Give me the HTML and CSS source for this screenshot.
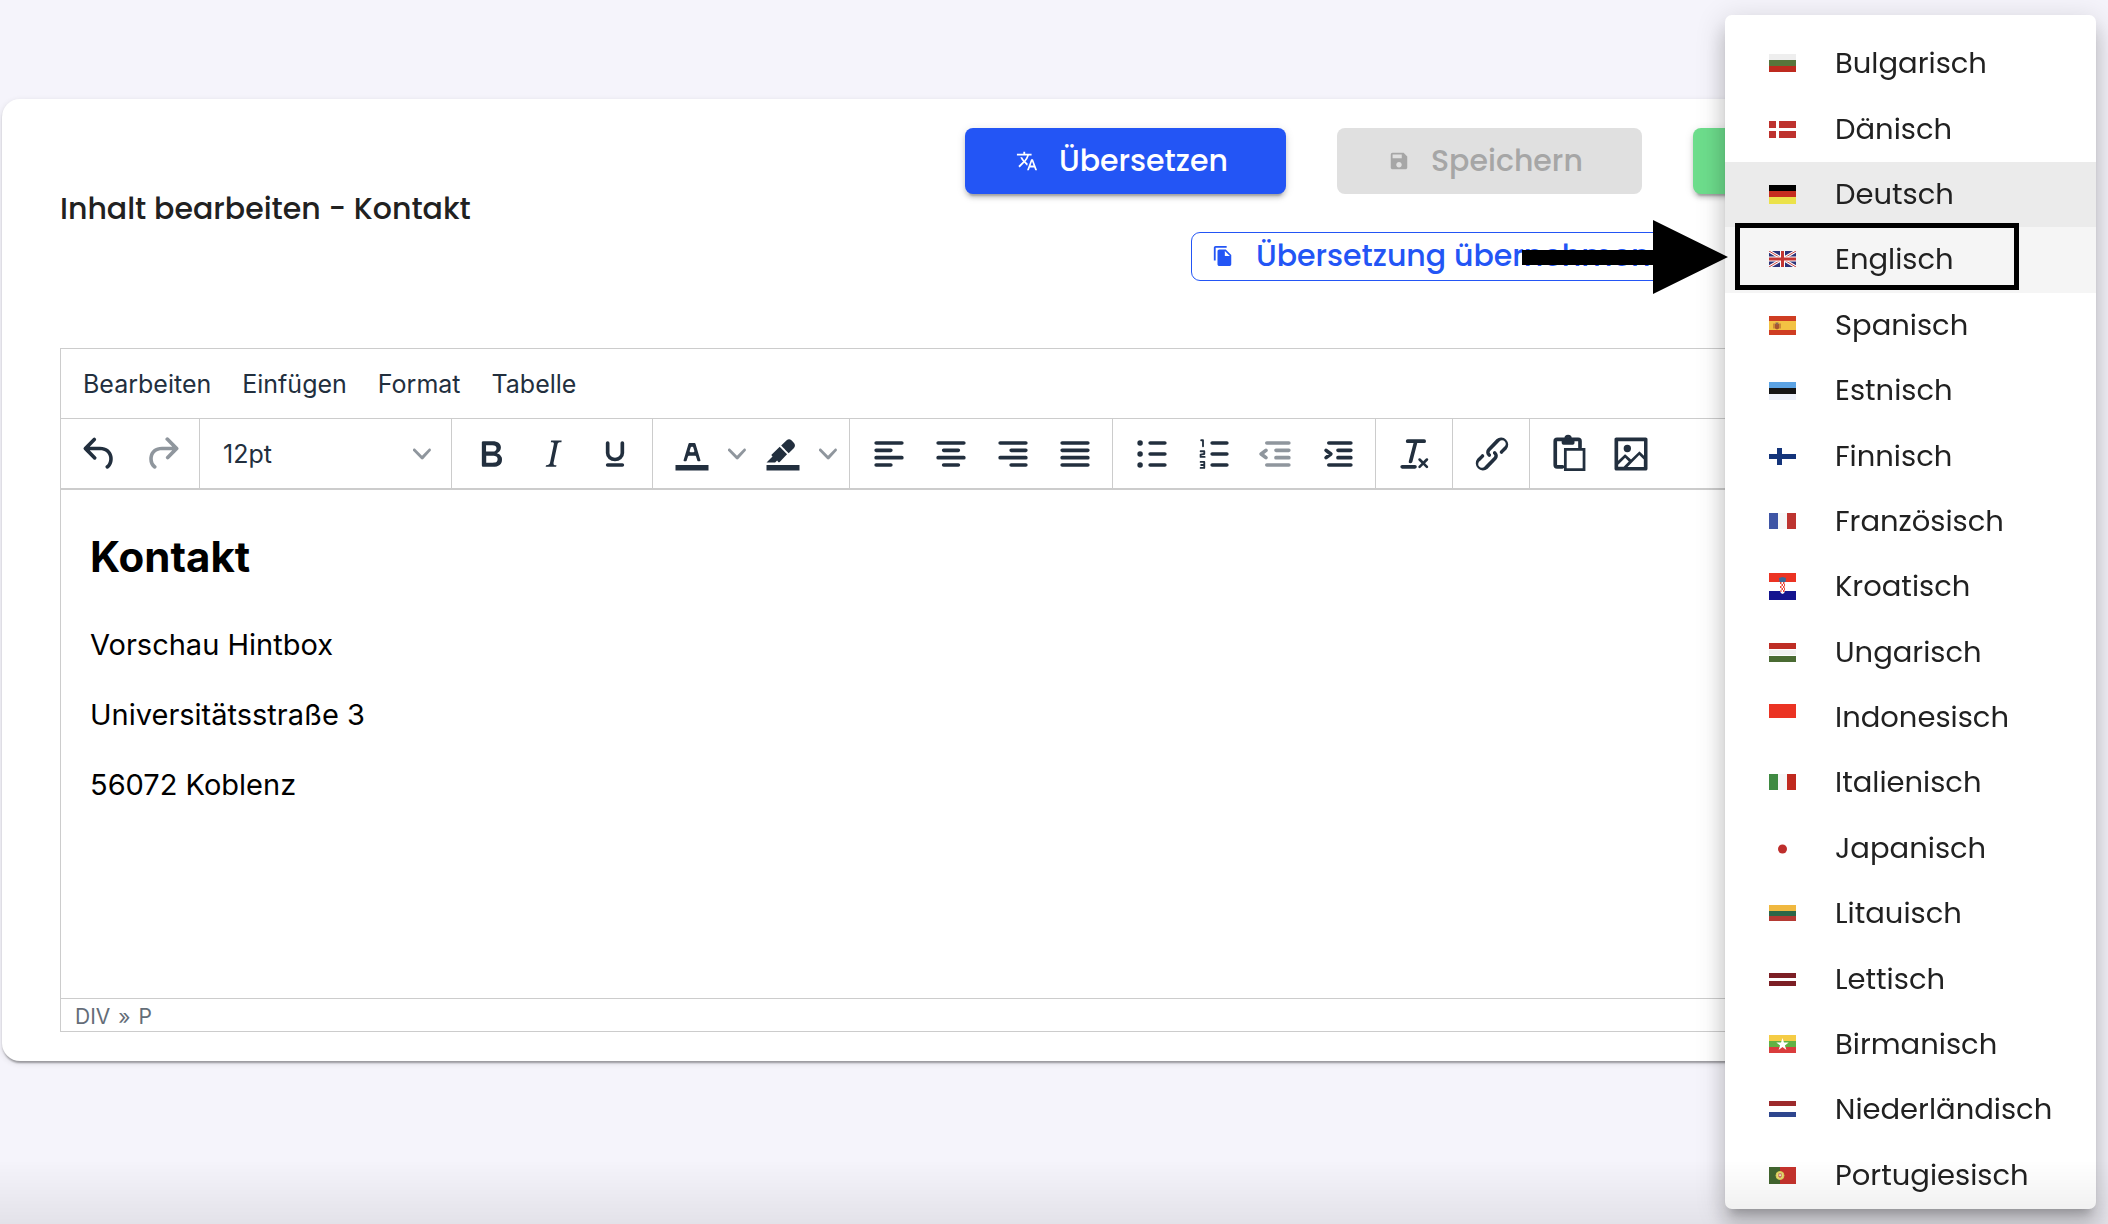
FILE: index.html
```html
<!DOCTYPE html>
<html lang="de">
<head>
<meta charset="utf-8">
<meta name="viewport" content="width=device-width, initial-scale=1">
<title>Inhalt bearbeiten - Kontakt</title>
<link rel="stylesheet" href="styles.css">
</head>
<body>
<main class="card">
  <header class="card-header">
    <h1 class="title">Inhalt bearbeiten - Kontakt</h1>
    <div class="actions">
      <div class="action-row">
        <button class="btn btn-primary" type="button">
          <svg class="btn-icon" viewBox="0 0 24 24" aria-hidden="true"><path d="M12.87 15.07l-2.54-2.51.03-.03A17.52 17.52 0 0 0 14.07 6H17V4h-7V2H8v2H1v1.99h11.17C11.5 7.92 10.44 9.75 9 11.35 8.07 10.32 7.3 9.19 6.69 8h-2c.73 1.63 1.73 3.17 2.98 4.56l-5.09 5.02L4 19l5-5 3.11 3.11.76-2.04zM18.5 10h-2L12 22h2l1.12-3h4.75L21 22h2l-4.5-12zm-2.62 7l1.62-4.33L19.12 17h-3.24z"/></svg>
          Übersetzen
        </button>
        <button class="btn btn-disabled" type="button" disabled>
          <svg class="btn-icon" viewBox="0 0 24 24" aria-hidden="true"><path d="M17 3H5a2 2 0 0 0-2 2v14c0 1.1.89 2 2 2h14c1.1 0 2-.9 2-2V7l-4-4zm-5 16c-1.66 0-3-1.34-3-3s1.34-3 3-3 3 1.34 3 3-1.34 3-3 3zm3-10H5V5h10v4z"/></svg>
          Speichern
        </button>
        <button class="btn btn-success" type="button" aria-label="Fertig"></button>
      </div>
      <button class="btn-outline" type="button">
        <svg class="btn-icon" viewBox="0 0 24 24" aria-hidden="true"><path d="M16 1H4c-1.1 0-2 .9-2 2v14h2V3h12V1zm-1 4l6 6v10c0 1.1-.9 2-2 2H7.99C6.89 23 6 22.1 6 21l.01-14c0-1.1.89-2 1.99-2h7zm-1 7h5.5L14 6.5V12z"/></svg>
        Übersetzung übernehmen
      </button>
    </div>
  </header>

  <section class="editor" aria-label="Editor">
    <div class="menubar" role="menubar">
      <button type="button" role="menuitem">Bearbeiten</button>
      <button type="button" role="menuitem">Einfügen</button>
      <button type="button" role="menuitem">Format</button>
      <button type="button" role="menuitem">Tabelle</button>
    </div>
    <div class="toolbar" role="toolbar">
      <div class="group">
        <button class="tool" type="button" aria-label="Rückgängig"><svg viewBox="0 0 24 24"><path d="M6.4 8H12c3.7 0 6.2 2 6.8 5.1.6 2.7-.4 5.6-2.3 6.8a1 1 0 0 1-1-1.8c1.1-.6 1.8-2.7 1.4-4.6-.5-2.1-2.1-3.5-4.9-3.5H6.4l3.3 3.3a1 1 0 1 1-1.4 1.4l-5-5a1 1 0 0 1 0-1.4l5-5a1 1 0 0 1 1.4 1.4L6.4 8Z"/></svg></button>
        <button class="tool" type="button" aria-label="Wiederholen" disabled><svg viewBox="0 0 24 24"><path d="M17.6 10H12c-2.8 0-4.4 1.4-4.9 3.5-.4 2 .3 4 1.4 4.6a1 1 0 1 1-1 1.8c-2-1.2-2.9-4.1-2.3-6.8.6-3 3-5.1 6.8-5.1h5.6l-3.3-3.3a1 1 0 1 1 1.4-1.4l5 5a1 1 0 0 1 0 1.4l-5 5a1 1 0 0 1-1.4-1.4l3.3-3.3Z"/></svg></button>
      </div>
      <div class="group">
        <div class="size-field">
          <select class="size" aria-label="Schriftgröße"><option>12pt</option></select>
          <svg class="chevron" viewBox="0 0 10 10" aria-hidden="true"><path d="M8.7 2.2c.3-.3.8-.3 1 0 .4.4.4.9 0 1.2L5.7 7.8c-.3.3-.9.3-1.2 0L.2 3.4a.8.8 0 0 1 0-1.2c.3-.3.8-.3 1.1 0L5 6l3.7-3.8Z"/></svg>
        </div>
      </div>
      <div class="group">
        <button class="tool" type="button" aria-label="Fett"><svg viewBox="0 0 24 24"><path d="M7.8 19c-.3 0-.5 0-.6-.2l-.2-.5V5.7c0-.2 0-.4.2-.5l.6-.2h5c1.5 0 2.7.3 3.5 1 .7.6 1.1 1.4 1.1 2.5a3 3 0 0 1-.6 1.9c-.4.6-1 1-1.6 1.2.4.1.9.3 1.3.6s.8.7 1 1.2c.4.4.5 1 .5 1.6 0 1.3-.4 2.3-1.3 3-.8.7-2.1 1-3.8 1H7.8Zm5-8.3c.6 0 1.2-.1 1.6-.5.4-.3.6-.7.6-1.3 0-1.1-.8-1.7-2.3-1.7H9.3v3.5h3.4Zm.5 6c.7 0 1.3-.1 1.7-.4.4-.4.6-.9.6-1.5s-.2-1-.7-1.4c-.4-.3-1-.4-2-.4H9.4v3.8h4Z"/></svg></button>
        <button class="tool" type="button" aria-label="Kursiv"><svg viewBox="0 0 24 24"><path d="m16.7 4.7-.1.9h-.3c-.6 0-1 0-1.4.3-.3.3-.4.6-.5 1.1l-2.1 9.8v.6c0 .5.4.8 1.4.8h.2l-.2.8H8l.2-.8h.2c1.1 0 1.8-.5 2-1.5l2-9.8.1-.5c0-.6-.4-.8-1.4-.8h-.3l.2-.9h5.8Z"/></svg></button>
        <button class="tool" type="button" aria-label="Unterstrichen"><svg class="line" viewBox="0 0 24 24"><path d="M8 6v5.500c0 2 1.800 3.500 4 3.500s4-1.500 4-3.500V6M8 18h8"/></svg></button>
      </div>
      <div class="group">
        <button class="tool tool-split" type="button" aria-label="Textfarbe"><svg viewBox="0 0 24 24"><path d="M3 18h18v3H3z"/><path d="M8.700 16h-.8a.5.5 0 0 1-.5-.6l2.700-9c.1-.3.3-.4.5-.4h2.800c.2 0 .4.1.5.4l2.700 9a.5.5 0 0 1-.5.6h-.8a.5.5 0 0 1-.4-.4l-.7-2.200c0-.3-.3-.4-.5-.4h-3.400c-.2 0-.4.1-.5.4l-.7 2.200c0 .3-.2.4-.4.4Zm2.600-7.600-.6 2a.5.5 0 0 0 .5.6h1.600a.5.5 0 0 0 .5-.6l-.6-2c0-.3-.3-.4-.5-.4h-.4c-.2 0-.4.1-.5.4Z"/></svg></button>
        <button class="tool-arrow" type="button" aria-label="Textfarbe wählen"><svg class="chevron" viewBox="0 0 10 10"><path d="M8.7 2.2c.3-.3.8-.3 1 0 .4.4.4.9 0 1.2L5.7 7.8c-.3.3-.9.3-1.2 0L.2 3.4a.8.8 0 0 1 0-1.2c.3-.3.8-.3 1.1 0L5 6l3.700-3.800Z"/></svg></button>
        <button class="tool tool-split" type="button" aria-label="Hintergrundfarbe"><svg viewBox="0 0 24 24"><path d="M3 18h18v3H3z"/><path d="M7.700 16.700H3l3.300-3.300-.7-.8L10.200 8l4 4.100-4 4.200c-.2.2-.6.2-.8 0l-.6-.7-1.100 1.100zm5-7.500L11 7.400l3-2.900a2 2 0 0 1 2.600 0L18 6c.7.7.7 2 0 2.700l-2.900 2.900-1.800-1.800-.5-.6"/></svg></button>
        <button class="tool-arrow" type="button" aria-label="Hintergrundfarbe wählen"><svg class="chevron" viewBox="0 0 10 10"><path d="M8.7 2.2c.3-.3.8-.3 1 0 .4.4.4.9 0 1.2L5.7 7.8c-.3.3-.9.3-1.2 0L.2 3.4a.8.8 0 0 1 0-1.2c.3-.3.8-.3 1.1 0L5 6l3.700-3.800Z"/></svg></button>
      </div>
      <div class="group">
        <button class="tool" type="button" aria-label="Linksbündig"><svg class="line" viewBox="0 0 24 24"><path d="M5 6h14M5 10h8M5 14h14M5 18h8"/></svg></button>
        <button class="tool" type="button" aria-label="Zentriert"><svg class="line" viewBox="0 0 24 24"><path d="M5 6h14M8 10h8M5 14h14M8 18h8"/></svg></button>
        <button class="tool" type="button" aria-label="Rechtsbündig"><svg class="line" viewBox="0 0 24 24"><path d="M5 6h14M11 10h8M5 14h14M11 18h8"/></svg></button>
        <button class="tool" type="button" aria-label="Blocksatz"><svg class="line" viewBox="0 0 24 24"><path d="M5 6h14M5 10h14M5 14h14M5 18h14"/></svg></button>
      </div>
      <div class="group">
        <button class="tool" type="button" aria-label="Aufzählung"><svg class="line" viewBox="0 0 24 24"><path d="M11 6h8M11 12h8M11 18h8"/><g class="solid"><circle cx="5.500" cy="6" r="1.500"/><circle cx="5.500" cy="12" r="1.500"/><circle cx="5.500" cy="18" r="1.500"/></g></svg></button>
        <button class="tool" type="button" aria-label="Nummerierte Liste"><svg class="line" viewBox="0 0 24 24"><path d="M11 6h8M11 12h8M11 18h8"/><path class="thin" d="M5 4.500h1v3.300M4.700 10.500h2v1.500l-2 .3v1.300h2.200M4.700 16.300h2v3.300h-2M5 18h1.600"/></svg></button>
        <button class="tool" type="button" aria-label="Einzug verkleinern" disabled><svg class="line" viewBox="0 0 24 24"><path d="M7 6h12M12 10h7M12 14h7M7 18h12M6.500 10l-2.600 2 2.600 2"/></svg></button>
        <button class="tool" type="button" aria-label="Einzug vergrößern"><svg class="line" viewBox="0 0 24 24"><path d="M7 6h12M12 10h7M12 14h7M7 18h12M5.500 10l2.600 2-2.600 2"/></svg></button>
      </div>
      <div class="group">
        <button class="tool" type="button" aria-label="Formatierung entfernen"><svg viewBox="0 0 24 24"><path d="M13.200 6a1 1 0 0 1 0 .2l-2.600 10a1 1 0 0 1-1 .8h-.2a.8.8 0 0 1-.8-1l2.600-10H8a1 1 0 1 1 0-2h9a1 1 0 0 1 0 2h-3.800ZM5 18h7a1 1 0 0 1 0 2H5a1 1 0 0 1 0-2Zm13 1.500L16.500 18 15 19.500a.7.7 0 0 1-1-1l1.500-1.500-1.500-1.500a.7.7 0 0 1 1-1l1.500 1.500 1.500-1.500a.7.7 0 0 1 1 1L17.500 17l1.500 1.500a.7.7 0 0 1-1 1Z"/></svg></button>
      </div>
      <div class="group">
        <button class="tool" type="button" aria-label="Link"><svg viewBox="0 0 24 24"><path d="M6.200 12.300a1 1 0 0 1 1.400 1.400l-2 2a2 2 0 1 0 2.600 2.800l4.800-4.800a1 1 0 0 0 0-1.400 1 1 0 1 1 1.400-1.300 2.900 2.900 0 0 1 0 4L9.600 20a3.900 3.900 0 0 1-5.500-5.500l2-2Zm11.600-.6a1 1 0 0 1-1.400-1.400l2-2a2 2 0 1 0-2.600-2.800L11 10.300a1 1 0 0 0 0 1.400A1 1 0 1 1 9.600 13a2.900 2.900 0 0 1 0-4L14.400 4a3.900 3.900 0 0 1 5.500 5.500l-2 2Z"/></svg></button>
      </div>
      <div class="group group-last">
        <button class="tool" type="button" aria-label="Einfügen"><svg class="line" viewBox="0 0 24 24"><path d="M8.500 19H5.500a1 1 0 0 1-1-1V5a1 1 0 0 1 1-1h11.500a1 1 0 0 1 1 1v3.500"/><path class="square" d="M10 9.500h10.200v11H10z"/><path class="solid" fill-rule="evenodd" d="M8 3.500h1.500a2 2 0 0 1 4 0H15V6a1 1 0 0 1-1 1H9a1 1 0 0 1-1-1zm3.500-.4a.9.9 0 1 0 0 1.800.9.9 0 0 0 0-1.800z"/></svg></button>
        <button class="tool" type="button" aria-label="Bild"><svg viewBox="0 0 24 24"><path fill-rule="evenodd" d="m5 15.700 3.300-3.200c.3-.3.7-.3 1 0L12 15l4.100-4c.3-.4.8-.4 1 0l2 1.900V5H5v10.700ZM5 18V19h3l2.800-2.900-2-2L5 17.900Zm14-3-2.500-2.400-6.400 6.500H19v-4ZM4 3h16c.6 0 1 .4 1 1v16c0 .6-.4 1-1 1H4a1 1 0 0 1-1-1V4c0-.6.4-1 1-1Zm6 8a2 2 0 1 0 0-4 2 2 0 0 0 0 4Z"/></svg></button>
      </div>
    </div>
    <article class="content">
      <h2>Kontakt</h2>
      <p>Vorschau Hintbox</p>
      <p>Universitätsstraße 3</p>
      <p>56072 Koblenz</p>
    </article>
    <footer class="statusbar"><span>DIV</span><span>»</span><span>P</span></footer>
  </section>
</main>

<ul class="languages" role="listbox" aria-label="Sprache">
  <li role="option"><svg class="flag" viewBox="0 0 27 27"><path fill="#eee" d="M0 4h27v6H0z"/><path fill="#57753b" d="M0 10h27v6H0z"/><path fill="#be2a1f" d="M0 16h27v6H0z"/></svg>Bulgarisch</li>
  <li role="option"><svg class="flag" viewBox="0 0 27 27"><path fill="#be322e" d="M0 5h7v7H0zM10 5h17v7H10zM0 15h7v7H0zM10 15h17v7H10z"/></svg>Dänisch</li>
  <li role="option" class="selected" aria-selected="true"><svg class="flag" viewBox="0 0 27 27"><path fill="#000" d="M0 4h27v6H0z"/><path fill="#c62d20" d="M0 10h27v6H0z"/><path fill="#ebe24a" d="M0 16h27v7H0z"/></svg>Deutsch</li>
  <li role="option" class="active"><svg class="flag" viewBox="0 0 27 27"><path fill="#2d3278" d="M0 5h27v16H0z"/><svg y="5" width="27" height="16" viewBox="0 0 27 16"><path stroke="#fff" stroke-width="3" d="M0 0l27 16M27 0L0 16"/><path stroke="#c8423f" stroke-width="1" d="M0 0l27 16M27 0L0 16"/><path stroke="#fff" stroke-width="5" d="M13.500 0v16M0 8h27"/><path stroke="#c33533" stroke-width="3" d="M13.500 0v16M0 8h27"/></svg></svg>Englisch</li>
  <li role="option"><svg class="flag" viewBox="0 0 27 27"><path fill="#cf3d22" d="M0 4h27v19H0z"/><path fill="#f3c243" d="M0 9h27v9H0z"/><path fill="#a8552f" d="M4.500 11.500h1v5h-1zM6 12h4v4.500l-2 1-2-1zM10.500 11.500h1v5h-1z"/><path fill="#8c6a5a" d="M6.500 10.500h3v2h-3z"/></svg>Spanisch</li>
  <li role="option"><svg class="flag" viewBox="0 0 27 27"><path fill="#5ca3e4" d="M0 5h27v6H0z"/><path fill="#151515" d="M0 11h27v6H0z"/><path fill="#eef2fb" d="M0 17h27v6H0z"/></svg>Estnisch</li>
  <li role="option"><svg class="flag" viewBox="0 0 27 27"><path fill="#14347a" d="M8 5h5v6h14v5H13v6H8v-6H0v-5h8z"/></svg>Finnisch</li>
  <li role="option"><svg class="flag" viewBox="0 0 27 27"><path fill="#3f55a5" d="M0 5h9v16H0z"/><path fill="#f7f7f7" d="M9 5h9v16H9z"/><path fill="#bd3430" d="M18 5h9v16h-9z"/></svg>Französisch</li>
  <li role="option"><svg class="flag" viewBox="0 0 27 27"><path fill="#eb3323" d="M0 0h27v9H0z"/><path fill="#fff" d="M0 9h27v9H0z"/><path fill="#14148f" d="M0 18h27v9H0z"/><path fill="#fff" d="M11 8h5v9q0 3-2.500 4Q11 20 11 17z"/><path fill="#eb4a3c" d="M11 9h1.500v2H11zM14 9h1.500v2H14zM12.500 11H14v2h-1.500zM15 11h1v2h-1zM11 13h1.500v2H11zM14 13h1.500v2H14zM12.500 15H14v2h-1.500zM15 15h1v2h-1zM11.500 17h1v2h-1zM14 17h1.500v2H14z"/><path fill="#39699a" d="M10 5l3.500-1L17 5l-.5 4h-6z"/></svg>Kroatisch</li>
  <li role="option"><svg class="flag" viewBox="0 0 27 27"><path fill="#be2d25" d="M0 4h27v6H0z"/><path fill="#f1f1f1" d="M0 11h27v5H0z"/><path fill="#4a6b33" d="M0 17h27v6H0z"/></svg>Ungarisch</li>
  <li role="option"><svg class="flag" viewBox="0 0 27 27"><path fill="#eb3323" d="M0 0h27v14H0z"/></svg>Indonesisch</li>
  <li role="option"><svg class="flag" viewBox="0 0 27 27"><path fill="#3f8a42" d="M0 5h9v16H0z"/><path fill="#f6f6f6" d="M9 5h9v16H9z"/><path fill="#c0291e" d="M18 5h9v16h-9z"/></svg>Italienisch</li>
  <li role="option"><svg class="flag" viewBox="0 0 27 27"><circle cx="13.500" cy="14" r="4.500" fill="#be2e2c"/></svg>Japanisch</li>
  <li role="option"><svg class="flag" viewBox="0 0 27 27"><path fill="#f0b83f" d="M0 5h27v6H0z"/><path fill="#2c6748" d="M0 11h27v6H0z"/><path fill="#b53a33" d="M0 16h27v5H0z"/></svg>Litauisch</li>
  <li role="option"><svg class="flag" viewBox="0 0 27 27"><path fill="#7c1f25" d="M0 7h27v5H0zM0 15h27v5H0z"/></svg>Lettisch</li>
  <li role="option"><svg class="flag" viewBox="0 0 27 27"><path fill="#f5cc45" d="M0 4h27v6H0z"/><path fill="#60b244" d="M0 10h27v6H0z"/><path fill="#da3c3c" d="M0 16h27v6H0z"/><path fill="#fff" d="m13.500 7 1.500 4.600h4.700l-3.800 2.800 1.500 4.600-3.900-2.900L9.600 19l1.500-4.600-3.800-2.800H12z"/></svg>Birmanisch</li>
  <li role="option"><svg class="flag" viewBox="0 0 27 27"><path fill="#9d2a2c" d="M0 5h27v5H0z"/><path fill="#2e468e" d="M0 16h27v5H0z"/></svg>Niederländisch</li>
  <li role="option"><svg class="flag" viewBox="0 0 27 27"><path fill="#42652f" d="M0 5h11v17H0z"/><path fill="#c5332d" d="M11 5h16v17H11z"/><circle cx="11" cy="13.500" r="4" fill="#e9dc74" stroke="#d8cf55"/><path fill="#c0504a" d="M9.500 11.500h3v3l-1.500 1.500-1.500-1.500z"/><path fill="#fff" d="M10.300 12.300h1.500v2h-1.500z"/></svg>Portugiesisch</li>
</ul>

<div class="shade"></div>
<svg class="pointer" viewBox="0 0 206 74" aria-hidden="true"><path d="M0 30h131V0l75 37-75 37V45H0z"/></svg>
<div class="highlight"></div>
</body>
</html>
```
FILE: styles.css
```css
* { box-sizing: border-box; }

body {
  margin: 0;
  min-height: 100vh;
  padding: 99px 20px 0 2px;
  background: #f5f4fb;
  font-family: Poppins, Inter, sans-serif;
  font-size: 28px;
  color: #212121;
  overflow: hidden;
}

button, select { font: inherit; color: inherit; border: 0; background: none; padding: 0; margin: 0; }
h1, h2, p, ul { margin: 0; padding: 0; }
svg { display: block; fill: currentColor; flex: none; }

.card {
  padding: 29px 58px;
  border-radius: 18px;
  background: #fff;
  box-shadow: 0 4px 2px -2px rgba(0,0,0,.2), 0 2px 2px rgba(0,0,0,.14), 0 2px 6px rgba(0,0,0,.12);
}

.card-header { display: flex; align-items: flex-start; justify-content: space-between; height: 220px; }
.title { font-size: 30px; font-weight: 500; line-height: 40px; padding-top: 61px; }

.actions { display: flex; flex-direction: column; align-items: center; gap: 38px; margin-right: 132px; }
.action-row { display: flex; gap: 51px; }
.btn {
  display: flex; align-items: center; gap: 21px;
  height: 66px; padding: 0 51px;
  border-radius: 8px;
  font-size: 30px; font-weight: 500;
}
.btn-icon { width: 22px; height: 22px; }
.btn-primary { width: 321px; color: #fff; background: #2355f5; }
.btn-disabled { width: 305px; color: #a6a6a6; background: #e0e0e0; }
.btn-success { width: 205px; background: #6ddd8c; }
.btn-primary, .btn-success {
  box-shadow: 0 6px 2px -4px rgba(0,0,0,.2), 0 4px 4px rgba(0,0,0,.14), 0 2px 10px rgba(0,0,0,.12);
}
.btn-outline {
  display: flex; align-items: center; gap: 22px;
  width: 481px; height: 49px; padding: 0 20px 2px;
  border: 1px solid #2355f5; border-radius: 9px;
  font-size: 30px; font-weight: 500; white-space: nowrap;
  color: #2355f5;
}

.editor { border: 1px solid #ccc; color: #222f3e; font-family: Inter, sans-serif; }
.menubar { display: flex; gap: 31px; height: 70px; padding: 0 22px; border-bottom: 1px solid #ccc; font-size: 25px; }

.toolbar { display: flex; height: 71px; border-bottom: 2px solid #ccc; }
.group { display: flex; align-items: center; padding: 0 6px 0 8px; border-right: 1px solid #ccc; }
.group-last { border-right: 0; }
.tool { display: flex; align-items: center; justify-content: center; width: 62px; height: 62px; }
.tool svg { width: 44px; height: 44px; }
.tool:disabled { opacity: .5; }
.tool-split { width: 61px; }
.tool-arrow { display: flex; align-items: center; justify-content: center; width: 30px; height: 62px; }
.line { stroke: currentColor; stroke-width: 2; stroke-linecap: round; stroke-linejoin: round; fill: none; }
.line .thin { stroke-width: 1; }
.line .square { stroke-linejoin: miter; fill: #fff; stroke-width: 1.5; }
.line .solid { fill: currentColor; stroke: none; }
.chevron { width: 18px; height: 18px; opacity: .5; }

.size-field { display: flex; align-items: center; width: 237px; padding: 0 14px 0 15px; }
.size { flex: 1; min-width: 0; height: 62px; appearance: none; font-size: 25px; }

.content { min-height: 508px; padding: 39px 29px; color: #000; }
.content h2 { font-size: 42px; font-weight: 700; line-height: 56px; margin-bottom: 42px; }
.content p { font-size: 29px; line-height: 36px; margin-bottom: 34px; }

.statusbar {
  display: flex; align-items: center; gap: 8px;
  height: 33px; padding: 2px 14px 0;
  border-top: 1px solid #ccc;
  font-size: 21px; color: #646d78;
}

.languages {
  position: fixed; top: 15px; bottom: 15px; right: 12px;
  display: flex; flex-direction: column;
  width: 371px; padding: 16px 0 1px;
  border-radius: 7px;
  background: #fff;
  list-style: none;
  font-size: 29px;
  box-shadow: 0 10px 10px -6px rgba(0,0,0,.2), 0 16px 20px 2px rgba(0,0,0,.14), 0 6px 28px 4px rgba(0,0,0,.12);
}
.languages li { display: flex; flex: 1; align-items: center; gap: 39px; padding: 0 44px; }
.selected { background: #ebebeb; }
.active { background: #f5f5f5; }
.flag { width: 27px; height: 27px; }

.shade {
  position: fixed; inset: auto 0 0; height: 64px;
  background: linear-gradient(transparent, rgba(0,0,0,.07));
  pointer-events: none;
}
.pointer { position: absolute; top: 220px; right: 380px; width: 206px; height: 74px; color: #000; }
.highlight { position: absolute; top: 223px; right: 89px; width: 284px; height: 67px; border: 5px solid #000; }
```
